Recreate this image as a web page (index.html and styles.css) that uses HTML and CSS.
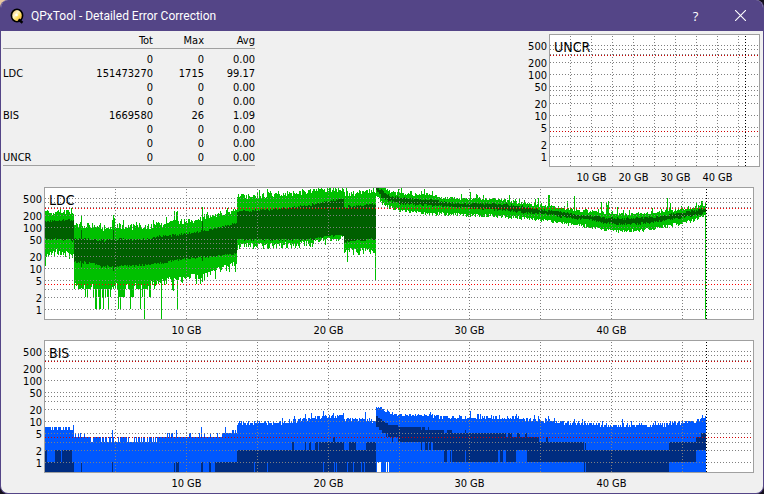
FILE: index.html
```
<!DOCTYPE html>
<html lang="en">
<head>
    <meta charset="UTF-8">
    <meta name="viewport" content="width=device-width, initial-scale=1.0">
    <title>QPxTool - Detailed Error Correction</title>
    <link rel="stylesheet" href="styles.css">
</head>
<body>
    <div class="window">
        <header class="titlebar">
            <svg class="app-icon" viewBox="0 0 16 16" width="16" height="16" aria-hidden="true">
                <defs>
                    <linearGradient id="disc" x1="0" y1="0" x2="1" y2="1">
                        <stop offset="0" stop-color="#f0b840"/>
                        <stop offset="0.4" stop-color="#fff4c8"/>
                        <stop offset="0.6" stop-color="#ffe060"/>
                        <stop offset="1" stop-color="#f09030"/>
                    </linearGradient>
                </defs>
                <ellipse cx="8" cy="7.5" rx="5.6" ry="6.2" fill="url(#disc)" stroke="#000" stroke-width="1.6"/>
                <circle cx="7.5" cy="7" r="1.3" fill="#fff"/>
                <path d="M9.5 11.5l4 3.2" stroke="#000" stroke-width="2.4"/>
            </svg>
            <h1>QPxTool - Detailed Error Correction</h1>
            <button class="caption-button" type="button" aria-label="Help">?</button>
            <button class="caption-button" type="button" aria-label="Close">
                <svg viewBox="0 0 10 10" width="11" height="11"><path d="M0 0L10 10M10 0L0 10" stroke="#fff" fill="none"/></svg>
            </button>
        </header>

        <main>
            <div class="top">
                <table class="stats">
                    <thead>
                        <tr><th></th><th>Tot</th><th>Max</th><th>Avg</th></tr>
                    </thead>
                    <tbody>
                        <tr><th></th><td>0</td><td>0</td><td>0.00</td></tr>
                        <tr><th>LDC</th><td>151473270</td><td>1715</td><td>99.17</td></tr>
                        <tr><th></th><td>0</td><td>0</td><td>0.00</td></tr>
                        <tr><th></th><td>0</td><td>0</td><td>0.00</td></tr>
                        <tr><th>BIS</th><td>1669580</td><td>26</td><td>1.09</td></tr>
                        <tr><th></th><td>0</td><td>0</td><td>0.00</td></tr>
                        <tr><th></th><td>0</td><td>0</td><td>0.00</td></tr>
                        <tr><th>UNCR</th><td>0</td><td>0</td><td>0.00</td></tr>
                    </tbody>
                </table>
                <svg class="chart chart-small" id="uncr"></svg>
            </div>
            <svg class="chart" id="ldc"></svg>
            <svg class="chart" id="bis"></svg>
        </main>
    </div>

    <script src="script.js"></script>
</body>
</html>
```

FILE: styles.css
```
body {
    margin: 0;
    background: linear-gradient(135deg, #e8c8a0 8px, #14101c 8px);
    color: #000;
    font-family: Tahoma, "DejaVu Sans Condensed", "DejaVu Sans", sans-serif;
    font-size: 11px;
}
.window {
    box-sizing: border-box;
    min-height: 100vh;
    border: 1px solid #544587;
    border-top: none;
    border-radius: 8px;
    background-color: #f0f0f0;
    overflow: hidden;
}
.titlebar {
    display: flex;
    align-items: center;
    height: 31px;
    padding-left: 8px;
    background-color: #544587;
    color: #fff;
}
.titlebar h1 {
    flex: 1;
    margin: 0 0 0 6px;
    font-family: "Segoe UI", Roboto, sans-serif;
    font-size: 12px;
    font-weight: normal;
}
.caption-button {
    width: 45px;
    height: 31px;
    padding: 0;
    border: none;
    background: none;
    color: #fff;
    font-family: "Segoe UI", "Open Sans", sans-serif;
    font-size: 13px;
}
.caption-button:hover {
    background-color: #6b5ca0;
}
.top {
    display: flex;
    justify-content: space-between;
    padding: 3px 3px 0 2px;
}
.stats {
    align-self: flex-start;
    border-collapse: collapse;
    line-height: 14px;
}
.stats th,
.stats td {
    width: 51px;
    padding: 0;
    font-weight: normal;
    text-align: right;
}
.stats th:first-child {
    width: 61px;
    text-align: left;
}
.stats th:nth-child(2) {
    width: 89px;
}
.stats thead {
    border-bottom: 1px solid #a0a0a0;
}
.stats tbody {
    border-bottom: 1px solid #a0a0a0;
}
.stats tbody tr:first-child td {
    padding-top: 4px;
}
.chart {
    display: block;
    box-sizing: border-box;
    width: 100%;
    height: 153px;
    padding-right: 9px;
    overflow: visible;
}
.chart-small {
    width: 241px;
    padding-right: 0;
}
.chart text {
    font-size: 11px;
}
.chart .name {
    font-size: 14px;
}
.chart .scale {
    text-anchor: end;
}
.chart .position {
    text-anchor: middle;
}
.chart .frame {
    fill: none;
    stroke: #a0a0a0;
}
.chart .paper {
    fill: #fff;
}
.chart .grid {
    stroke: #808080;
    stroke-dasharray: 1 2;
}
.chart .limit {
    stroke: #d00000;
    stroke-dasharray: 1 2;
}
#ldc .limit {
    stroke: #ff0000;
}
.chart .end {
    stroke: #000;
    stroke-dasharray: 1 2;
}
.ldc-range {
    fill: #00c000;
}
.ldc-avg {
    fill: #006000;
}
.bis-range {
    fill: #0058ff;
}
.bis-avg {
    fill: #002c80;
}
```

FILE: script.js
```
const SVG = 'http://www.w3.org/2000/svg';
const PLOT_HEIGHT = 132;
const DECADE = 41;
const ONE = 122;       // distance of the "1" line from the top
const SAMPLES = 709;   // samples on a 50 GB axis
const LAST = 661;      // last recorded sample

// sample, min, avg low, avg high, max
const ldc = [
    [0, 25, 50, 140, 215], [10, 27, 50, 143, 225], [28, 21, 46, 150, 240],
    [29, 4.6, 14, 51, 108], [45, 4.3, 13.5, 50, 108], [56, 3.8, 11, 47, 92],
    [75, 4, 11, 50, 105], [98, 4, 12, 50, 92], [115, 4.8, 13, 59, 115],
    [140, 6.5, 17, 68, 138], [165, 8, 19, 85, 175], [191, 13, 23, 122, 240],
    [192, 38, 49, 240, 540], [235, 38, 49, 280, 590], [265, 42, 50, 350, 720],
    [285, 52, 60, 430, 800], [298, 57, 63, 490, 850],
    [299, 27, 43, 310, 640], [330, 30, 50, 360, 740],
    [331, 615, 743, 990, 1500], [337, 400, 510, 760, 940], [345, 310, 423, 583, 700],
    [355, 260, 372, 510, 640], [385, 220, 337, 465, 590], [397, 215, 320, 400, 510],
    [425, 200, 290, 372, 480], [455, 193, 265, 370, 465], [475, 172, 228, 320, 372],
    [500, 146, 210, 255, 325], [515, 133, 180, 233, 291], [530, 115, 160, 200, 250],
    [545, 106, 148, 189, 235], [560, 90, 125, 166, 210], [575, 84, 118, 160, 202],
    [595, 87, 120, 166, 210], [615, 100, 138, 182, 230], [635, 128, 166, 220, 265],
    [650, 155, 193, 255, 290], [661, 200, 233, 291, 370]
];
const ldcPeaks = [
    [36, 190], [67, 150], [68, 200], [69, 170], [129, 250], [131, 235], [132, 240], [157, 300],
    [356, 870], [379, 850], [416, 640], [425, 730], [431, 640], [438, 590], [464, 590],
    [490, 480], [493, 520], [503, 590], [504, 590], [522, 440], [529, 560], [556, 400],
    [561, 400], [562, 350], [563, 430], [572, 310], [622, 500], [625, 380], [651, 380], [656, 430]
];
const ldcDips = [
    [0, 11], [50, 1], [51, 1], [54, 1], [55, 1], [58, 1], [63, 1], [73, 1], [75, 1], [85, 1],
    [95, 1], [99, 0], [116, 0], [132, 1], [151, 4], [155, 4], [159, 5], [302, 14], [330, 5],
    [660, 0]
];

const bis = [
    [0, 0, 0, 1.7, 6.8], [28, 0, 0, 1.3, 6.8],
    [29, 0, 0, 0, 4.4], [38, 0, 0, 0, 3.9], [60, 0, 0, 0, 3.5], [100, 0, 0, 0, 3.5],
    [120, 0, 0, 0.1, 4.1], [155, 0, 0, 0.1, 4.1], [175, 0, 0, 0.5, 4.4],
    [176, 0, 0, 1, 4.8], [191, 0, 0, 1, 5.2],
    [192, 0, 0, 2, 8.9], [240, 0, 0, 2, 9.3], [265, 0, 0, 2.2, 11.2],
    [285, 0, 0, 3, 12.6], [298, 0, 0, 3.6, 13.4],
    [299, 0, 0, 2.7, 10.8], [330, 0, 0, 2.5, 10.4],
    [331, 0, 7, 13, 23], [337, 0, 5, 10, 20], [345, 0, 3.9, 8, 16], [353, 0, 3, 7, 14.2],
    [370, 0, 3, 7, 14], [382, 0, 2.6, 6.3, 13.5], [397, 0, 1.9, 5.8, 12.3],
    [410, 0, 1.3, 5.5, 12.2], [440, 0, 1.3, 5.1, 11.8], [465, 0, 1.4, 4.8, 11.8],
    [477, 0, 2, 4.2, 11.1], [486, 0, 1, 4, 10.8], [492, 0, 0.7, 3.9, 10.3], [494, 0, 1, 3.1, 10.3],
    [520, 0, 1, 3, 9], [535, 0, 1, 3, 8.6], [536, 0, 0.5, 2.5, 8.3], [552, 0, 0, 2.1, 8],
    [585, 0, 0, 2, 7.6], [623, 0, 0, 2, 8], [624, 0, 1, 3, 8.8], [650, 0, 1, 3, 9.4],
    [651, 0, 1.8, 4, 10.8], [661, 0, 1.7, 4.7, 12]
];
const bisPeaks = [
    [67, 6], [131, 6], [156, 7], [180, 7], [260, 15], [266, 16], [278, 18], [288, 16], [320, 17],
    [425, 18], [503, 13], [509, 12], [529, 11], [586, 10], [657, 14]
];

// fixed seed, so that a redraw gives the same curve
function createNoise(seed) {
    return function () {
        seed = (seed * 1664525 + 1013904223) % 4294967296;
        return seed / 4294967296;
    };
}

function valuesAt(points, sample) {
    let i = 1;
    while (i < points.length - 1 && points[i][0] < sample) i++;
    const a = points[i - 1];
    const b = points[i];
    const t = Math.min(1, Math.max(0, (sample - a[0]) / (b[0] - a[0])));
    return a.slice(1).map((v, k) => v + (b[k + 1] - v) * t);
}

function yOf(value) {
    if (value < 0.6) return PLOT_HEIGHT;
    return Math.max(1, Math.round(ONE - DECADE * Math.log10(value)));
}

function ldcColumns() {
    const noise = createNoise(7);
    const columns = [];
    for (let s = 0; s < LAST; s++) {
        let [min, low, high, max] = valuesAt(ldc, s);
        const spread = s > 330 ? 0.5 : 1;
        max *= 1 + (noise() - 0.4) * 0.36 * spread;
        if (noise() > 0.9) max *= 1.2;
        high *= 1 + (noise() - 0.5) * 0.14;
        low *= 1 + (noise() - 0.5) * 0.14;
        min *= 1 - (noise() - 0.3) * 0.4 * spread;
        if (s > 28 && s < 112 && noise() > 0.4) min = noise() > 0.5 ? 2 : 3;
        if (s >= 112 && s < 192 && noise() > 0.86) min *= 0.65;
        columns.push([min, low, high, max]);
    }
    ldcPeaks.forEach(([s, v]) => { columns[s][3] = v; });
    ldcDips.forEach(([s, v]) => { columns[s][0] = v; });
    [36, 68, 157].forEach(s => { columns[s][2] *= 1.7; columns[s][1] *= 0.8; });
    return columns;
}

function bisColumns() {
    const noise = createNoise(23);
    const columns = [];
    let drift = 0.5;
    for (let s = 0; s < LAST; s++) {
        let [min, low, high, max] = valuesAt(bis, s);
        if (noise() > 0.55) drift = noise();
        max = Math.round(max + (noise() - 0.45) * Math.max(1.3, max * 0.22));
        if (s > 191 && noise() > 0.93) max += 2;
        high = Math.floor(high + drift);
        low = Math.floor(low + drift);
        if (s > 192 && s < 331 && noise() > 0.92) low = 1;
        columns.push([min, low, high, max]);
    }
    bisPeaks.forEach(([s, v]) => { columns[s][3] = v; });
    [36, 67, 131, 132, 156, 157].forEach(s => { columns[s][2] = 1; });
    [332, 333, 334, 335, 341, 343].forEach(s => { columns[s][0] = 1; });
    return columns;
}

function add(parent, name, attributes, text) {
    const node = document.createElementNS(SVG, name);
    for (const key in attributes) node.setAttribute(key, attributes[key]);
    if (text) node.textContent = text;
    parent.appendChild(node);
    return node;
}

function bars(columns, from, to, step, left) {
    let d = '';
    columns.forEach((column, s) => {
        const top = yOf(column[to]);
        const bottom = yOf(column[from]);
        if (bottom <= top) return;
        const x0 = left + Math.round(s * step);
        const x1 = left + Math.round((s + 1) * step);
        d += `M${x0} ${top}H${x1}V${bottom}H${x0}Z`;
    });
    return d;
}

function drawChart(id, label, left, columns) {
    const svg = document.getElementById(id);
    const style = getComputedStyle(svg);
    const width = Math.floor(svg.getBoundingClientRect().width - parseFloat(style.paddingRight));
    const plot = width - left - 1;
    svg.innerHTML = '';

    add(svg, 'rect', { class: 'paper', x: left, y: 0, width: plot, height: PLOT_HEIGHT });
    if (columns) {
        const step = plot / SAMPLES;
        add(svg, 'path', { class: id + '-range', d: bars(columns, 0, 3, step, left + 1) });
        add(svg, 'path', { class: id + '-avg', d: bars(columns, 1, 2, step, left + 1) });
    }

    [1, 2, 3, 5, 10, 20, 30, 40, 50, 100, 200, 300, 400, 500].forEach(value => {
        const y = yOf(value) + 0.5;
        add(svg, 'line', { class: 'grid', x1: left + 1, x2: left + plot, y1: y, y2: y });
    });
    [4, 290].forEach(value => {
        const y = yOf(value) + 0.5;
        add(svg, 'line', { class: 'limit', x1: left + 1, x2: left + plot, y1: y, y2: y });
    });
    for (let gb = 5; gb < 50; gb += 5) {
        const x = left + Math.round(plot * gb / 50) + 0.5;
        add(svg, 'line', { class: 'grid', x1: x, x2: x, y1: 2, y2: PLOT_HEIGHT });
        if (gb % 10 === 0) {
            add(svg, 'text', { class: 'position', x: x, y: PLOT_HEIGHT + 15 }, gb + ' GB');
        }
    }
    const end = left + Math.round(plot * 46.7 / 50) + 0.5;
    add(svg, 'line', { class: 'end', x1: end, x2: end, y1: 2, y2: PLOT_HEIGHT });

    [1, 2, 5, 10, 20, 50, 100, 200, 500].forEach(value => {
        add(svg, 'text', { class: 'scale', x: left - 2, y: yOf(value) + 5 }, String(value));
    });
    add(svg, 'text', { class: 'name', x: left + 5, y: 18 }, label);
    add(svg, 'rect', { class: 'frame', x: left + 0.5, y: 0.5, width: plot, height: PLOT_HEIGHT });
}

function draw() {
    drawChart('uncr', 'UNCR', 30, null);
    drawChart('ldc', 'LDC', 43, ldcColumns());
    drawChart('bis', 'BIS', 43, bisColumns());
}

draw();
window.addEventListener('resize', draw);
```
